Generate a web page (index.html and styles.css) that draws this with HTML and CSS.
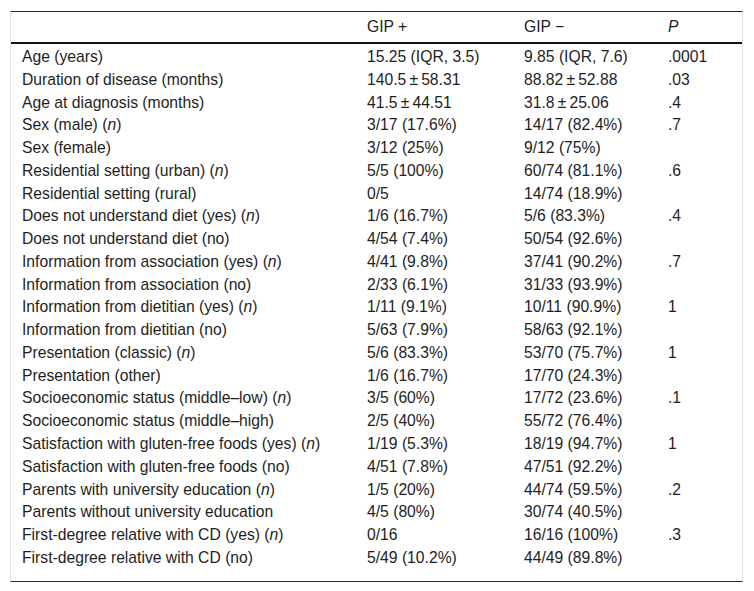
FILE: index.html
```html
<!DOCTYPE html>
<html lang="en">
<head>
<meta charset="utf-8">
<title>GIP table</title>
<link rel="stylesheet" href="styles.css">
</head>
<body>
<div class="frame">
<table class="data">
<colgroup>
<col class="c-label"><col class="c-pos"><col class="c-neg"><col class="c-p">
</colgroup>
<thead>
<tr><th></th><th>GIP +</th><th>GIP −</th><th><i>P</i></th></tr>
</thead>
<tbody>
<tr class="first"><td>Age (years)</td><td>15.25 (IQR, 3.5)</td><td>9.85 (IQR, 7.6)</td><td>.0001</td></tr>
<tr><td>Duration of disease (months)</td><td>140.5&#8201;±&#8201;58.31</td><td>88.82&#8201;±&#8201;52.88</td><td>.03</td></tr>
<tr><td>Age at diagnosis (months)</td><td>41.5&#8201;±&#8201;44.51</td><td>31.8&#8201;±&#8201;25.06</td><td>.4</td></tr>
<tr><td>Sex (male) (<i>n</i>)</td><td>3/17 (17.6%)</td><td>14/17 (82.4%)</td><td>.7</td></tr>
<tr><td>Sex (female)</td><td>3/12 (25%)</td><td>9/12 (75%)</td><td></td></tr>
<tr><td>Residential setting (urban) (<i>n</i>)</td><td>5/5 (100%)</td><td>60/74 (81.1%)</td><td>.6</td></tr>
<tr><td>Residential setting (rural)</td><td>0/5</td><td>14/74 (18.9%)</td><td></td></tr>
<tr><td>Does not understand diet (yes) (<i>n</i>)</td><td>1/6 (16.7%)</td><td>5/6 (83.3%)</td><td>.4</td></tr>
<tr><td>Does not understand diet (no)</td><td>4/54 (7.4%)</td><td>50/54 (92.6%)</td><td></td></tr>
<tr><td>Information from association (yes) (<i>n</i>)</td><td>4/41 (9.8%)</td><td>37/41 (90.2%)</td><td>.7</td></tr>
<tr><td>Information from association (no)</td><td>2/33 (6.1%)</td><td>31/33 (93.9%)</td><td></td></tr>
<tr><td>Information from dietitian (yes) (<i>n</i>)</td><td>1/11 (9.1%)</td><td>10/11 (90.9%)</td><td>1</td></tr>
<tr><td>Information from dietitian (no)</td><td>5/63 (7.9%)</td><td>58/63 (92.1%)</td><td></td></tr>
<tr><td>Presentation (classic) (<i>n</i>)</td><td>5/6 (83.3%)</td><td>53/70 (75.7%)</td><td>1</td></tr>
<tr><td>Presentation (other)</td><td>1/6 (16.7%)</td><td>17/70 (24.3%)</td><td></td></tr>
<tr><td>Socioeconomic status (middle–low) (<i>n</i>)</td><td>3/5 (60%)</td><td>17/72 (23.6%)</td><td>.1</td></tr>
<tr><td>Socioeconomic status (middle–high)</td><td>2/5 (40%)</td><td>55/72 (76.4%)</td><td></td></tr>
<tr><td>Satisfaction with gluten-free foods (yes) (<i>n</i>)</td><td>1/19 (5.3%)</td><td>18/19 (94.7%)</td><td>1</td></tr>
<tr><td>Satisfaction with gluten-free foods (no)</td><td>4/51 (7.8%)</td><td>47/51 (92.2%)</td><td></td></tr>
<tr><td>Parents with university education (<i>n</i>)</td><td>1/5 (20%)</td><td>44/74 (59.5%)</td><td>.2</td></tr>
<tr><td>Parents without university education</td><td>4/5 (80%)</td><td>30/74 (40.5%)</td><td></td></tr>
<tr><td>First-degree relative with CD (yes) (<i>n</i>)</td><td>0/16</td><td>16/16 (100%)</td><td>.3</td></tr>
<tr class="last"><td>First-degree relative with CD (no)</td><td>5/49 (10.2%)</td><td>44/49 (89.8%)</td><td></td></tr>
</tbody>
</table>
</div>
</body>
</html>
```

FILE: styles.css
```css
html, body {
  margin: 0;
  padding: 0;
  background: #ffffff;
}
body {
  padding: 11px 11px 0 10px;
  font-family: "Liberation Sans", Arial, sans-serif;
  font-size: 15.7px;
  color: #1e1e1e;
}
.frame {
  width: 731px;
  border-top: 1px solid #2a2a2a;
  border-bottom: 1px solid #2a2a2a;
  border-left: 1px solid #e2e2e2;
  border-right: 1px solid #e2e2e2;
  padding-bottom: 11px;
}
.data {
  width: 731px;
  border-collapse: collapse;
  table-layout: fixed;
}
.c-label { width: 345px; }
.c-pos { width: 157px; }
.c-neg { width: 144px; }
.c-p { width: 85px; }
.data th {
  height: 30px;
  padding: 0 0 0 11px;
  text-align: left;
  font-weight: normal;
  border-bottom: 2px solid #111;
  vertical-align: middle;
}
.data td {
  padding: 0 0 0 11px;
  height: 22.77px;
  line-height: 22.77px;
  white-space: nowrap;
  vertical-align: middle;
}
.data tr.first td {
  padding-top: 2px;
}
.data i {
  font-style: italic;
}
```
